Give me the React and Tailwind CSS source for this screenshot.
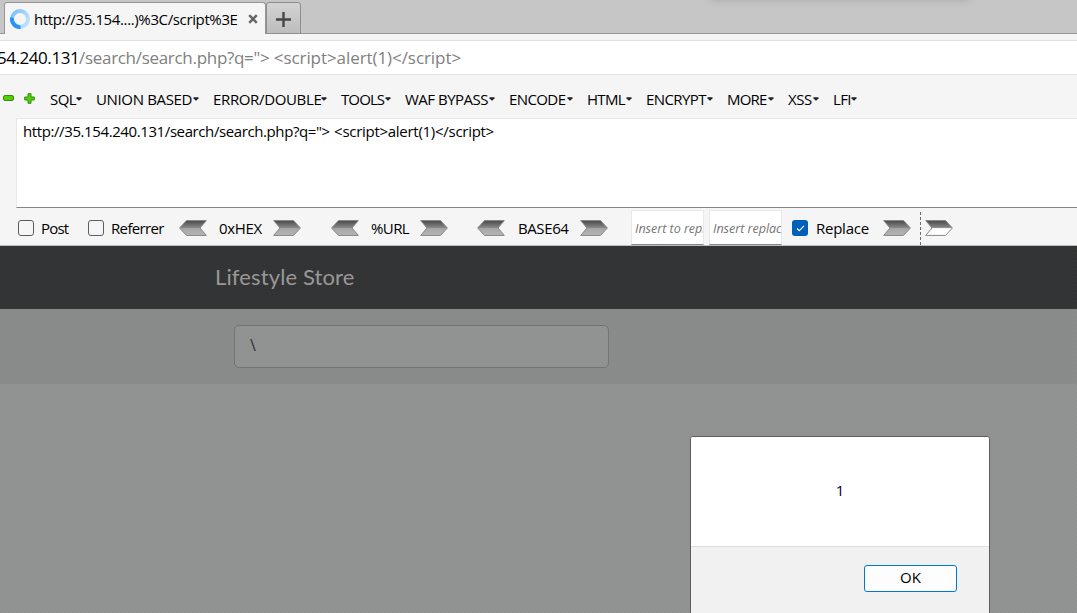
import React from "react";

const MENUS = [
  { label: "SQL", box: "w-[32px]", text: "tracking-[-0.6px]" },
  { label: "UNION BASED", box: "w-[103px]", text: "tracking-[-0.35px]" },
  { label: "ERROR/DOUBLE", box: "w-[114px]", text: "tracking-[-0.35px]" },
  { label: "TOOLS", box: "w-[50px]", text: "tracking-[-0.9px]" },
  { label: "WAF BYPASS", box: "w-[90px]", text: "tracking-[-0.5px]" },
  { label: "ENCODE", box: "w-[64px]", text: "tracking-[-0.6px]" },
  { label: "HTML", box: "w-[45px]", text: "tracking-[-0.7px]" },
  { label: "ENCRYPT", box: "w-[67px]", text: "tracking-[-0.6px]" },
  { label: "MORE", box: "w-[47px]", text: "tracking-[-0.8px]" },
  { label: "XSS", box: "w-[31px]", text: "tracking-[-0.45px]" },
  { label: "LFI", box: "w-[24px]", text: "tracking-[-0.7px]" },
];

function MenuItem({ label, box, text }) {
  return (
    <button className={`flex h-6 shrink-0 items-center justify-between whitespace-nowrap ${box}`}>
      <span className={`min-w-0 ${text}`}>{label}</span>
      <svg className="mb-[2px] h-[4px] w-[6px] shrink-0" viewBox="0 0 6 4">
        <path d="M0.5 0.2h5v1L3.5 3.6h-1L0.5 1.2z" fill="#222" />
      </svg>
    </button>
  );
}

function Chevron({ flip, hollow, id, className = "" }) {
  return (
    <svg className={`h-4 w-7 shrink-0 ${className}`} viewBox="0 0 28 16">
      <defs>
        <linearGradient id={id} x1="0" y1="0" x2="0" y2="1">
          <stop offset="0" stopColor="#484848" />
          <stop offset="0.46" stopColor="#858585" />
          <stop offset="0.54" stopColor={hollow ? "#ffffff" : "#a6a6a6"} />
          <stop offset="1" stopColor={hollow ? "#ffffff" : "#b6b6b6"} />
        </linearGradient>
      </defs>
      <path
        d="M0.7 0.6H20.5L27.4 8L20.5 15.4H0.7L7 8Z"
        fill={`url(#${id})`}
        stroke="#858585"
        strokeWidth="1"
        transform={flip ? "translate(28 0) scale(-1 1)" : undefined}
      />
    </svg>
  );
}

function Box() {
  return <span className="h-4 w-4 shrink-0 rounded-[3px] border border-[#5c5c5c] bg-[#f6f6f6]" />;
}

function Hatch({ id, opacity }) {
  return (
    <svg className="pointer-events-none absolute inset-0 h-full w-full">
      <pattern id={id} width="4" height="4" patternUnits="userSpaceOnUse">
        <path d="M0 0h1v1H0zM1 1h1v1H1zM3 1h1v1H3zM2 2h1v1H2zM1 3h1v1H1zM3 3h1v1H3z" fill="#000" fillOpacity={opacity} shapeRendering="crispEdges" />
      </pattern>
      <rect width="100%" height="100%" fill={`url(#${id})`} />
    </svg>
  );
}

export default function App() {
  return (
    <div className="relative flex h-[613px] w-[1077px] flex-col overflow-hidden bg-[#f5f5f5] font-['Open_Sans','Noto_Sans',sans-serif] text-[15px] text-black">
      {/* Tab strip */}
      <div className="relative flex h-[34px] shrink-0 bg-[#c6c6c6] pl-[4px] shadow-[inset_0_-1px_0_#999799]">
        <div className="absolute -top-3 left-[710px] h-3 w-[260px] shadow-[0_0_9px_rgba(0,0,0,0.14)]" />
        <div className="relative mt-[2px] flex h-[32px] w-[262px] items-center rounded-t-[3px] border-x border-t border-[#969696] bg-[#f5f5f5] pt-[3px] pl-[5px]">
          <svg className="-mt-[3px] h-5 w-5 shrink-0" viewBox="0 0 20 20">
            <defs>
              <linearGradient id="spin" x1="0" y1="0" x2="1" y2="0.6">
                <stop offset="0" stopColor="#79bffa" />
                <stop offset="1" stopColor="#b9e0fc" />
              </linearGradient>
            </defs>
            <circle cx="10" cy="10" r="8" fill="none" stroke="url(#spin)" strokeWidth="3.8" />
            <path d="M2 8.5A8 8 0 0 0 10.5 18" fill="none" stroke="#2795f5" strokeWidth="3.8" />
          </svg>
          <span className="-mt-px ml-1 w-[204px] whitespace-nowrap tracking-[-0.37px]">http://35.154....)%3C/script%3E</span>
          <svg className="-mt-[2px] ml-[10px] h-[10px] w-[10px] shrink-0" viewBox="0 0 10 10">
            <path d="M1.2 1.2L8.8 8.8M8.8 1.2L1.2 8.8" stroke="#666" strokeWidth="2.4" />
          </svg>
        </div>
        <div className="mt-[2px] flex h-[32px] w-[35px] items-center justify-center rounded-t-[3px] border border-[#8e8e8e] bg-linear-to-b from-[#d3d3d3] to-[#bdbdbd] pt-[2px]">
          <svg className="h-[15px] w-[15px]" viewBox="0 0 15 15">
            <path d="M7.5 0V15M0 7.5H15" stroke="#464646" strokeWidth="2.4" />
          </svg>
        </div>
      </div>

      {/* Address bar */}
      <div className="mt-[6px] flex h-[35px] shrink-0 items-center border-y border-[#e2e2e2] bg-white text-[17px]">
        <span className="-ml-[3px] w-[82px] shrink-0 whitespace-nowrap tracking-[-0.45px]">54.240.131</span>
        <span className="whitespace-nowrap tracking-[-0.07px] text-[#808080]">
          <span className="tracking-[-0.3px]">/search/search.php?q="</span>
          <span className="tracking-[4px]">&gt;</span>
          &lt;script&gt;alert(1)&lt;/script&gt;
        </span>
      </div>

      {/* Toolbar menus */}
      <div className="flex h-[43px] shrink-0 items-center pt-[6px] pl-[3px]">
        <svg className="mb-[3px] h-[6px] w-[11px] shrink-0" viewBox="0 0 11 6">
          <rect x="0.5" y="0.5" width="10" height="5" rx="1.5" fill="#50d000" stroke="#378d16" />
        </svg>
        <svg className="mb-[2px] ml-[10px] h-[11px] w-[11px] shrink-0" viewBox="0 0 11 11">
          <path d="M4 .7h3V4h3.3v3H7v3.3H4V7H.7V4H4z" fill="#50d000" stroke="#378d16" strokeLinejoin="round" />
        </svg>
        <div className="ml-[15px] flex gap-[14px]">
          {MENUS.map((m) => (
            <MenuItem key={m.label} {...m} />
          ))}
        </div>
      </div>

      {/* Payload editor */}
      <div className="ml-[16px] flex h-[90px] shrink-0 items-start border-t border-b border-l border-t-[#e8e8e8] border-b-[#858585] border-l-[#e8e8e8] bg-white pt-px pl-[6px]">
        <span className="whitespace-nowrap tracking-[-0.28px]">
          <span className="tracking-[-0.4px]">http://35.154.240.131/search/search.php?q="</span>
          <span className="tracking-[4px]">&gt;</span>
          &lt;script&gt;alert(1)&lt;/script&gt;
        </span>
      </div>

      {/* Encoding controls */}
      <div className="flex h-[38px] shrink-0 items-center border-b border-[#bdbdbd] pt-[3px] pl-[18px] whitespace-nowrap">
        <Box />
        <span className="ml-[7px] w-[47px] tracking-[-0.8px]">Post</span>
        <Box />
        <span className="ml-[7px] w-[68px] tracking-[-0.65px]">Referrer</span>
        <Chevron id="c1" flip />
        <span className="ml-[12px] w-[54px] tracking-[-0.3px]">0xHEX</span>
        <Chevron id="c2" />
        <span className="w-[30px] shrink-0" />
        <Chevron id="c3" flip />
        <span className="ml-[12px] w-[49px] tracking-[-0.6px]">%URL</span>
        <Chevron id="c4" />
        <span className="w-[29px] shrink-0" />
        <Chevron id="c5" flip />
        <span className="ml-[13px] w-[62px] tracking-[-0.4px]">BASE64</span>
        <Chevron id="c6" />
        <div className="-mt-[2px] ml-[23px] flex h-[35px] w-[73px] shrink-0 items-center overflow-hidden border border-[#e8e8e8] border-b-[#858585] bg-white pt-[4px] pl-[3px] text-[12.5px] text-[#757575] italic">Insert to repl</div>
        <div className="-mt-[2px] ml-[5px] flex h-[35px] w-[73px] shrink-0 items-center overflow-hidden border border-[#e8e8e8] border-b-[#858585] bg-white pt-[4px] pl-[3px] text-[12.5px] text-[#757575] italic">Insert replac</div>
        <span className="ml-[10px] flex h-4 w-4 shrink-0 items-center justify-center rounded-[3px] bg-[#005fb8]">
          <svg className="h-[7px] w-[9px]" viewBox="0 0 10 8"><path d="M1 4L3.6 6.5L9 1" fill="none" stroke="#fff" strokeWidth="1.2" /></svg>
        </span>
        <span className="ml-[8px] w-[67px] tracking-[-0.25px]">Replace</span>
        <Chevron id="c7" />
        <svg className="ml-[9px] h-[33px] w-px shrink-0" viewBox="0 0 1 33">
          <path d="M0.5 0V33" stroke="#6d6d6d" strokeDasharray="3 2" />
        </svg>
        <Chevron id="c8" hollow className="ml-[4px]" />
      </div>

      {/* Page content */}
      <div className="relative flex min-h-0 flex-1 flex-col bg-[#939494]">
        <div className="relative h-[63px] shrink-0 bg-[#353637] pt-[14px] pl-[215px] font-['Lato',sans-serif] text-[22px] leading-[33px] text-[#989898]">
          <Hatch id="hatch-dark" opacity="0.1" />
          <span className="relative tracking-[0.12px] whitespace-nowrap">Lifestyle Store</span>
        </div>
        <div className="relative h-[75px] shrink-0 bg-[#8b8c8c] pt-[16px] pl-[234px]">
          <div className="flex h-[43px] w-[375px] items-center rounded-[5px] border border-[#747576] bg-[#939494] pb-[3px] pl-[15px] text-[16px] text-[#333]">\</div>
          <Hatch id="hatch-mid" opacity="0.04" />
        </div>
        <div className="relative flex-1">
          <Hatch id="hatch-light" opacity="0.04" />
        </div>
      </div>

      {/* Alert dialog */}
      <div className="absolute top-[436px] left-[690px] flex h-[190px] w-[300px] flex-col overflow-hidden rounded-t-[3px] border border-[#5e5e5e] bg-[#f1f1f1]">
        <div className="flex h-[110px] shrink-0 items-center justify-center border-b border-[#dfdfdf] bg-white pb-[3px] text-[15px] text-[#000033]">1</div>
        <div className="flex justify-end pt-[18px] pr-[32px]">
          <button className="h-[27px] w-[93px] rounded-[3px] border border-[#0078d4] bg-[#fdfdfd] pb-[3px] text-[15px] leading-[22px]">OK</button>
        </div>
      </div>
    </div>
  );
}
